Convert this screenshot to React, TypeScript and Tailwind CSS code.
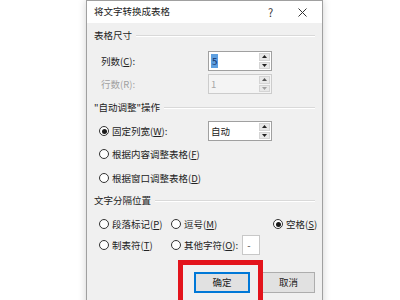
import React from "react";

function Radio({ checked = false }: { checked?: boolean }) {
  return (
    <span className="w-[10px] h-[10px] rounded-full border border-[#333333] bg-white flex items-center justify-center shrink-0">
      {checked && <span className="w-[5px] h-[5px] rounded-full bg-[#1a1a1a]" />}
    </span>
  );
}

function Arrow({ up, disabled = false }: { up: boolean; disabled?: boolean }) {
  return (
    <div className="flex-1 flex items-center justify-center bg-[#e8e8e8] border border-[#d4d4d4]">
      <svg width="5" height="3" viewBox="0 0 5 3">
        {up ? (
          <polygon points="0,3 5,3 2.5,0" fill={disabled ? "#555" : "#222"} />
        ) : (
          <polygon points="0,0 5,0 2.5,3" fill={disabled ? "#a0a0a0" : "#222"} />
        )}
      </svg>
    </div>
  );
}

function Spin({ children, disabled = false }: { children: React.ReactNode; disabled?: boolean }) {
  return (
    <div
      className={
        "w-[64px] h-[20px] border flex shrink-0 " +
        (disabled ? "border-[#cccccc] bg-[#f4f4f4]" : "border-[#a0a0a0] bg-white")
      }
    >
      <div className="flex-1 flex items-center pl-[2px]">{children}</div>
      <div className="w-[12px] flex flex-col gap-[1px] py-[1px] pr-[1px]">
        <Arrow up disabled={disabled} />
        <Arrow up={false} disabled={disabled} />
      </div>
    </div>
  );
}

function GroupHeader({ children }: { children: React.ReactNode }) {
  return (
    <div className="h-[12px] flex items-center gap-[4px]">
      <span className="text-[#222] leading-none whitespace-nowrap">{children}</span>
      <div className="flex-1 border-t border-[#d9d9d9] border-b-white border-b" />
    </div>
  );
}

export default function App() {
  return (
    <div className="relative w-[400px] h-[300px] overflow-hidden bg-white font-['Noto_Sans_CJK_SC','Microsoft_YaHei',sans-serif] text-[9.5px]">
      <div className="ml-[86px] w-[237px] h-[320px] border border-[#a0a0a0] bg-[#f0f0f0] shadow-[0_0_8px_rgba(0,0,0,0.18)] flex flex-col">
        {/* title bar */}
        <div className="h-[22px] bg-white flex items-center pl-[7px] text-[#222]">
          <span className="flex-1 leading-none">将文字转换成表格</span>
          <span className="w-[30px] text-[11px] leading-none text-[#333]">?</span>
          <span className="w-[24px] flex items-center">
            <svg width="9" height="9" viewBox="0 0 9 9">
              <path d="M0.5 0.5 L8.5 8.5 M8.5 0.5 L0.5 8.5" stroke="#333" strokeWidth="1" />
            </svg>
          </span>
        </div>

        {/* body */}
        <div className="flex flex-col px-[7px] pt-[7px] text-[#222]">
          <GroupHeader>表格尺寸</GroupHeader>

          <div className="mt-[9px] h-[20px] flex items-center pl-[7px]">
            <span className="w-[107px]">
              列数(<u>C</u>):
            </span>
            <Spin>
              <span className="bg-[#5d9fe0] text-[#10306a] px-[1px] leading-[14px]">5</span>
            </Spin>
          </div>

          <div className="mt-[3px] h-[20px] flex items-center pl-[7px]">
            <span className="w-[107px] text-[#a0a0a0]">行数(R):</span>
            <Spin disabled>
              <span className="text-[#a8a8a8]">1</span>
            </Spin>
          </div>

          <div className="mt-[8px]">
            <GroupHeader>{'"自动调整"操作'}</GroupHeader>
          </div>

          <div className="mt-[7px] h-[20px] flex items-center pl-[5px]">
            <div className="w-[109px] flex items-center gap-[3px]">
              <Radio checked />
              <span>
                固定列宽(<u>W</u>):
              </span>
            </div>
            <Spin>
              <span>自动</span>
            </Spin>
          </div>

          <div className="mt-[3px] h-[20px] flex items-center gap-[3px] pl-[5px]">
            <Radio />
            <span>
              根据内容调整表格(<u>F</u>)
            </span>
          </div>

          <div className="mt-[4px] h-[20px] flex items-center gap-[3px] pl-[5px]">
            <Radio />
            <span>
              根据窗口调整表格(<u>D</u>)
            </span>
          </div>

          <div className="mt-[7px]">
            <GroupHeader>文字分隔位置</GroupHeader>
          </div>

          <div className="mt-[9px] h-[16px] flex items-center pl-[5px] whitespace-nowrap -mr-[6px]">
            <div className="w-[72px] shrink-0 flex items-center gap-[3px]">
              <Radio />
              <span>
                段落标记(<u>P</u>)
              </span>
            </div>
            <div className="w-[102px] shrink-0 flex items-center gap-[3px]">
              <Radio />
              <span>
                逗号(<u>M</u>)
              </span>
            </div>
            <div className="shrink-0 flex items-center gap-[3px]">
              <Radio checked />
              <span>
                空格(<u>S</u>)
              </span>
            </div>
          </div>

          <div className="mt-[3px] h-[20px] flex items-center pl-[5px] whitespace-nowrap">
            <div className="w-[72px] shrink-0 flex items-center gap-[3px]">
              <Radio />
              <span>
                制表符(<u>T</u>)
              </span>
            </div>
            <div className="shrink-0 flex items-center gap-[3px]">
              <Radio />
              <span>
                其他字符(<u>O</u>):
              </span>
            </div>
            <div className="ml-[4px] w-[18px] h-[20px] bg-white border border-[#c8c8c8] flex items-center pl-[4px] text-[#444]">
              -
            </div>
          </div>

          <div className="mt-[17px] flex justify-end gap-[12px] pr-[0px]">
            <div className="w-[56px] h-[21px] bg-[#e1e1e1] border border-[#0078d7] shadow-[inset_0_0_0_1px_#0078d7] flex items-center justify-center">
              确定
            </div>
            <div className="w-[53px] h-[21px] bg-[#e1e1e1] border border-[#adadad] flex items-center justify-center">
              取消
            </div>
          </div>
        </div>
      </div>

      {/* red annotation box */}
      <div className="absolute left-[178px] top-[260px] w-[85px] h-[60px] border-[5px] border-[#e3141c]" />
    </div>
  );
}
